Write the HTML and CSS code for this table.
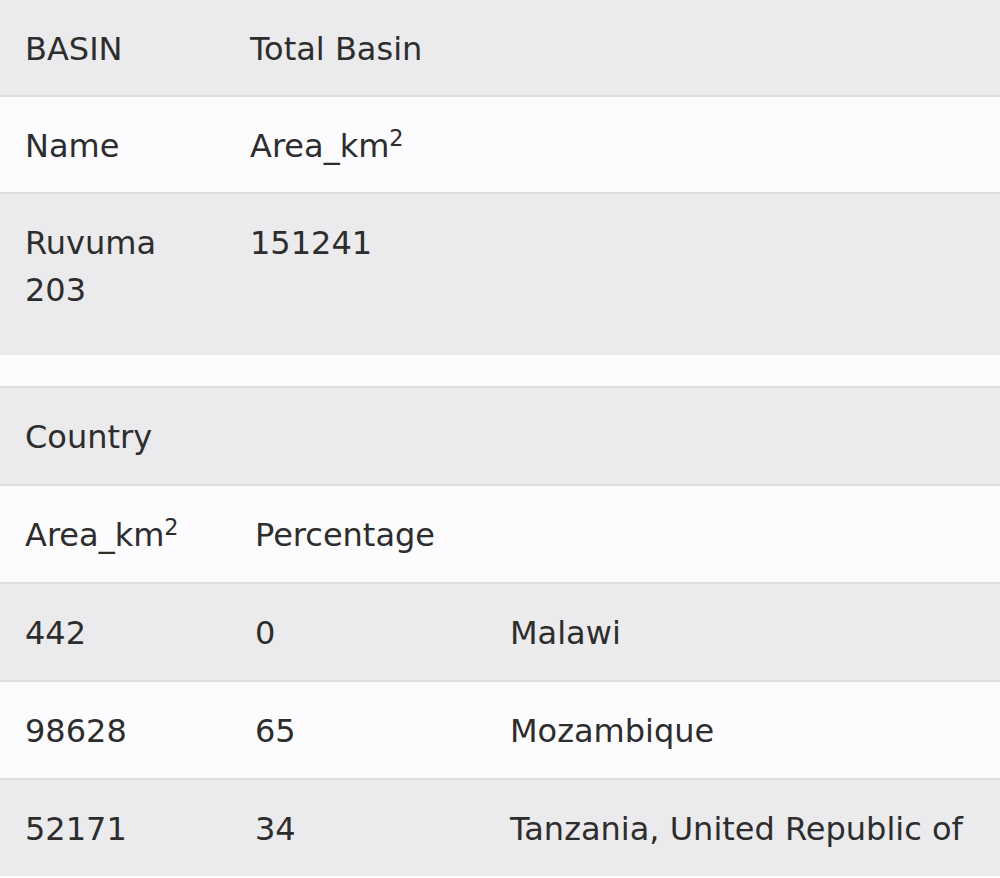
FILE: index.html
```html
<!DOCTYPE html>
<html>
<head>
<meta charset="utf-8">
<link rel="stylesheet" href="styles.css">
</head>
<body>
<table class="tbl basin">
  <colgroup><col class="b1"><col></colgroup>
  <tr class="gray"><td>BASIN</td><td>Total Basin</td></tr>
  <tr class="white"><td>Name</td><td>Area_km<sup class="sup">2</sup></td></tr>
  <tr class="gray last"><td>Ruvuma 203</td><td>151241</td></tr>
</table>
<table class="tbl country">
  <colgroup><col class="c1"><col class="c2"><col></colgroup>
  <tr class="gray"><td colspan="3">Country</td></tr>
  <tr class="white"><td>Area_km<sup class="sup">2</sup></td><td colspan="2">Percentage</td></tr>
  <tr class="gray"><td>442</td><td>0</td><td>Malawi</td></tr>
  <tr class="white"><td>98628</td><td>65</td><td>Mozambique</td></tr>
  <tr class="gray"><td>52171</td><td>34</td><td>Tanzania, United Republic of</td></tr>
</table>
</body>
</html>
```
FILE: styles.css
```css
html, body {
  margin: 0;
  padding: 0;
  background: #fcfbfd;
}
body {
  font-family: "DejaVu Sans", Verdana, sans-serif;
  font-size: 32px;
  line-height: 47px;
  color: #2d2d2d;
}
.tbl {
  width: 1000px;
  border-collapse: separate;
  border-spacing: 0;
  table-layout: fixed;
}
.tbl td {
  padding: 26px 0 22px 25px;
  vertical-align: top;
  border-bottom: 2px solid #dedde0;
}
.gray { background: #ebeaec; }
.white { background: #fcfbfd; }
.b1 { width: 225px; }
.basin td:first-child { padding-right: 40px; }
.basin tr.last td {
  border-bottom: none;
  padding-bottom: 41px;
}
.country {
  margin-top: 31px;
  border-top: 2px solid #dedde0;
}
.country td { padding: 26px 0 23px 25px; }
.country tr:last-child td { border-bottom: none; }
.c1 { width: 230px; }
.c2 { width: 255px; }
.sup {
  font-size: 0.7em;
  line-height: 0;
  vertical-align: 0.5em;
}
```
